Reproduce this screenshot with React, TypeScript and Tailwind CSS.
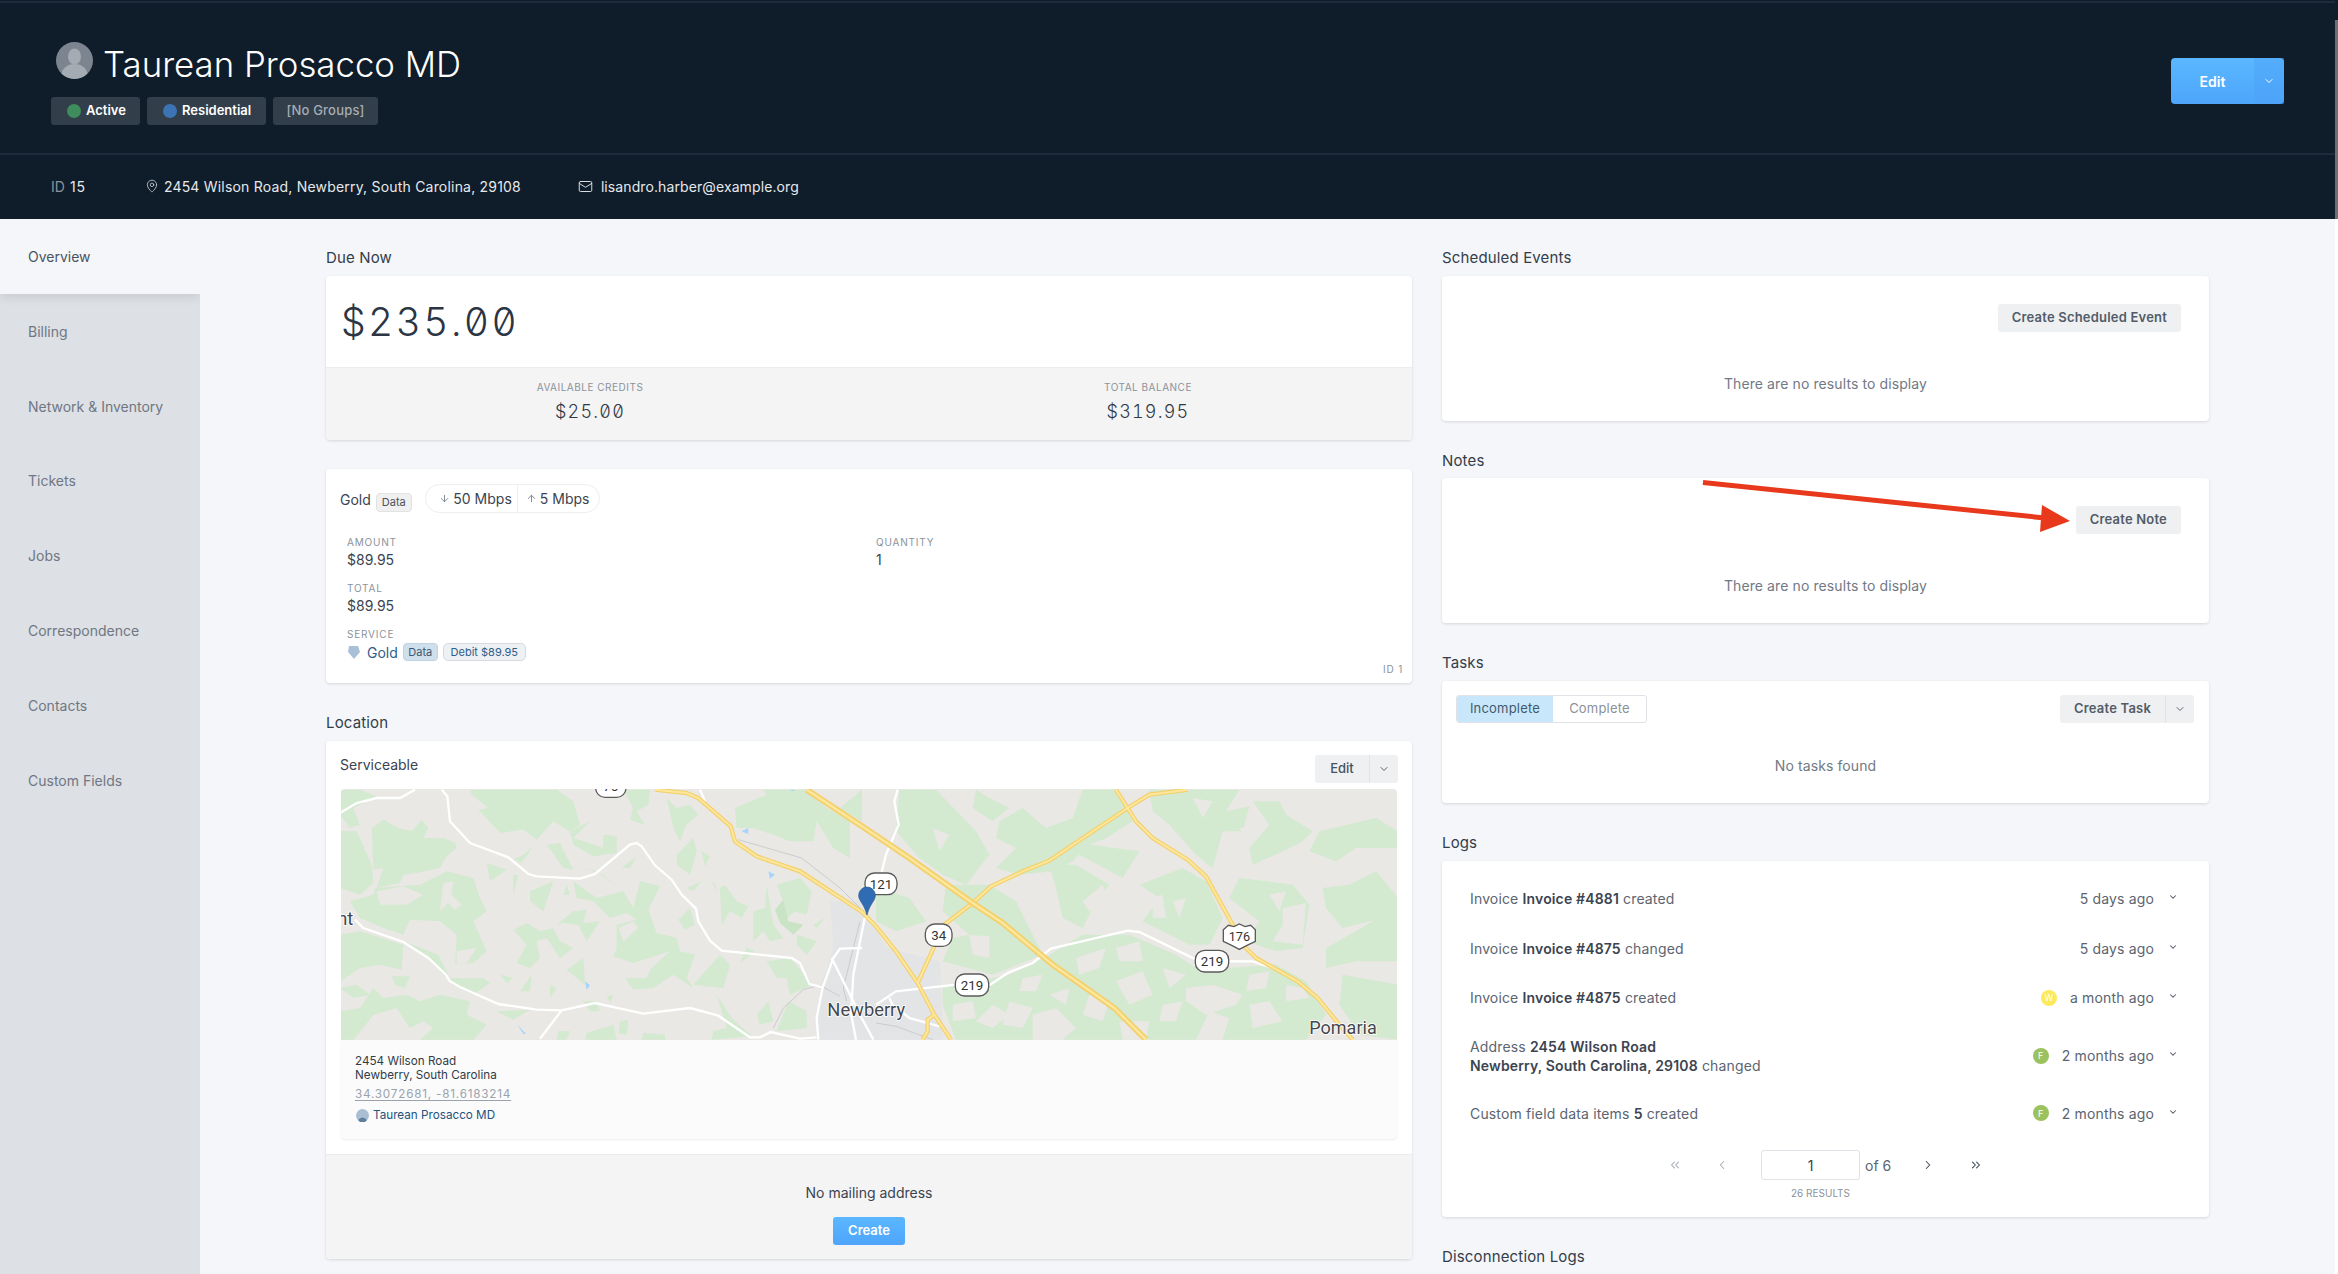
import { ArrowDown, ArrowUp, ChevronDown, ChevronLeft, ChevronRight, ChevronsLeft, ChevronsRight, Mail, MapPin } from "lucide-react";

const sideItems = ["Billing", "Network & Inventory", "Tickets", "Jobs", "Correspondence", "Contacts", "Custom Fields"];

const greens = [
    "390,5 650,5 700,40 720,110 690,130 750,100 700,150 790,180 790,140 830,145 830,195 760,205 700,170 690,130 640,100 590,155 550,125 480,135 430,80 415,65 445,60 395,20",
    "850,5 930,5 925,50 890,70 915,110 870,95 880,60",
    "980,30 1010,60 1050,50 1075,80 1040,110 1020,160 1000,120",
    "1010,200 1060,150 1070,190 1050,260 1010,230",
    "1085,190 1110,205 1095,235",
    "1185,60 1280,20 1270,5 1400,5 1460,60 1530,100 1530,210 1480,180 1430,100 1420,160 1350,160 1300,140 1240,120 1190,120",
    "1500,60 1566,5 1566,100",
    "0,5 60,5 110,25 40,60 60,110 30,120 0,80",
    "0,130 50,130 95,230 100,285 60,320 0,300",
    "95,120 130,95 175,120 215,130 245,95 265,120 250,150 310,150 345,165 350,180 320,205 300,240 230,255 190,260 180,285 110,300 130,240 100,245",
    "105,300 240,290 320,250 400,270 420,330 440,370 400,400 440,490 400,525 345,530 350,440 300,400 210,395 190,440 130,420 60,390 30,340 100,320",
    "0,440 60,430 190,470 185,545 120,530 60,540 0,580",
    "190,460 260,510 330,570 430,570 450,585 400,620 340,590 295,500",
    "100,600 130,630 200,620 240,640 300,620 390,640 380,680 440,710 400,755 240,755 280,720 250,700 210,720 170,660 100,680 70,720 40,755 0,755 0,670 60,660",
    "0,600 50,590 90,620 40,630",
    "155,565 210,565 195,600 165,590",
    "480,560 520,570 500,585",
    "540,610 575,560 570,610",
    "630,590 650,600 630,630",
    "570,310 640,280 610,370 570,340",
    "680,290 690,320 670,320",
    "700,280 770,330 850,310 880,360 900,280 960,295 925,365 950,435 1010,450 1020,490 1065,500 1040,570 1060,600 1000,560 940,600 880,605 855,570 920,570 930,545 990,490 880,525 820,505 830,480 830,410 890,395 860,375 810,390 760,340 710,330",
    "520,425 560,405 600,430 640,420 660,460 700,480 660,510 620,450 590,460 600,510 570,540 530,525 560,470",
    "650,410 700,370 740,365 730,405 780,400 740,460 715,410 670,405",
    "680,545 730,510 735,590",
    "440,225 500,245 450,280",
    "520,260 535,260 520,320",
    "550,200 580,175 545,225 520,215",
    "620,170 660,165 700,245 670,240",
    "730,240 770,250 830,295 790,260",
    "845,240 890,205 870,240",
    "1015,395 1050,360 1065,410 1035,425",
    "1040,300 1085,280 1060,310",
    "1110,280 1135,310 1125,290",
    "1140,300 1155,290 1190,340 1225,355 1205,390 1170,370 1145,410",
    "1240,370 1275,360 1280,290 1300,410 1330,450 1290,460 1270,430 1240,460",
    "1310,290 1380,270 1415,310 1400,380 1365,370 1340,390 1330,340",
    "1220,480 1245,490 1200,525",
    "1140,500 1170,530 1150,600 1060,590",
    "1280,520 1350,510 1420,590 1350,620 1340,570 1310,570",
    "1370,440 1430,460 1400,500 1370,470",
    "1420,410 1455,390 1430,420",
    "1130,620 1175,690 1235,745 1115,755 1120,730 1160,720",
    "1250,680 1285,640 1300,700 1260,710",
    "1345,640 1400,670 1400,720 1310,730",
    "730,640 770,640 780,670 750,670",
    "655,730 690,730 680,755 650,755",
    "740,735 820,710 830,755 735,755",
    "910,735 975,740 975,755 905,755",
    "470,670 570,665 520,695",
    "800,625 820,620 810,645",
    "840,700 865,695 860,740 835,735",
];

const leftHoles = [
    "110,310 190,295 250,320 200,350 120,350",
    "310,285 340,280 330,340 300,370",
    "335,320 365,350 345,365 322,345",
    "350,490 410,480 380,525 350,530",
    "835,420 880,400 895,420 850,460",
];

const rightGreens = [
    "70,5 180,5 300,130 340,200 270,290 200,260 130,210 60,130",
    "300,5 340,30 400,60 350,100 290,60",
    "370,100 440,60 510,120 590,90 620,5 720,5 770,100 690,150 640,170 590,220 530,250 430,260 360,240 420,180 360,150",
    "820,5 1090,5 1050,70 1120,55 1100,130 1040,130 1010,240 960,200 880,110 830,70",
    "1130,40 1210,40 1230,80 1310,130 1280,160 1220,190 1130,230 1120,180 1180,110",
    "1330,130 1500,90 1566,130 1566,180 1440,180 1380,220 1300,190",
    "640,170 790,190 740,270 610,200",
    "520,230 600,230 700,290 650,360 620,420 560,390 540,300",
    "790,290 920,240 990,280 1040,390 1000,470 940,470 860,430 800,400 850,330",
    "0,300 100,330 150,400 60,430 0,400",
    "210,290 340,290 420,340 500,500 400,540 350,560 200,520 230,450 280,440 200,370",
    "200,600 400,560 520,500 620,440 760,440 900,500 960,540 1050,540 1200,530 1290,580 1350,680 1290,755 240,755 200,650",
    "1090,270 1250,290 1300,350 1280,480 1200,490 1110,460 1150,400 1060,330",
    "1340,300 1420,290 1500,250 1566,330 1566,380 1480,400 1400,420 1350,360",
    "1350,480 1440,430 1520,380 1566,380 1566,520 1440,520 1350,540",
    "1400,560 1566,590 1566,755 1450,740 1390,650",
];

const rightHoles = [
    "400,640 470,660 440,720 380,710",
    "470,680 540,660 600,720 560,755 470,755",
    "640,620 700,640 680,700 620,680",
    "720,580 800,550 830,620 760,650",
    "930,600 1010,590 1100,620 1080,650 990,680 930,640",
    "860,540 930,560 880,600",
    "1230,590 1280,600 1300,630 1230,640",
    "1000,670 1060,690 1040,755 960,755",
    "730,700 820,700 810,755 740,755",
    "280,440 340,445 340,510 290,500",
    "600,510 690,480 670,540 610,560",
    "720,480 790,460 800,520 730,520",
    "830,330 860,320 870,390 830,390",
    "890,340 930,330 910,390",
    "620,340 680,290 700,340 640,370",
    "1180,320 1230,310 1210,370",
    "1220,360 1290,345 1280,470 1190,460 1220,410",
    "440,570 500,560 480,610 430,610",
    "520,620 580,600 570,650",
    "860,650 920,640 900,700 850,700",
    "1120,560 1180,550 1170,600 1110,610",
    "1120,650 1180,640 1220,700 1130,720",
    "1320,560 1380,600 1350,640",
    "480,420 530,440 500,480",
    "350,650 400,680 350,720 300,700",
    "230,650 290,640 300,690 230,700",
    "1090,120 1180,110 1120,170",
    "950,30 1010,40 980,90",
    "560,30 610,20 590,70",
    "170,120 220,140 190,190",
    "100,250 170,290 120,320",
];

const whiteRoads = [
    "0,75 50,45 110,30 180,30 225,5",
    "305,5 322,25 330,100 390,165 505,208 565,258 590,265 720,272 765,258 870,170 890,165 905,175 945,232 995,275 1025,320 1068,362 1075,400 1110,458 1145,488 1355,510 1380,525 1408,588 1448,598 1480,510 1500,482 1566,480",
    "45,395 70,420 190,462 265,510 318,560 328,578 360,597 475,648 590,665 665,667 765,645 910,677 1050,660 1135,683 1230,748 1260,748 1292,732 1380,752 1430,748",
    "665,667 600,752",
    "1080,5 1095,40",
    "1448,598 1430,690 1435,755",
    "1475,510 1565,690 1600,755",
    "1575,386 1540,560 1533,676 1548,755",
    "1673,5 1663,40 1676,110 1638,200 1623,260",
    "1608,650 1668,610 1848,590",
    "1948,592 2003,555 2078,525 2133,482 2363,428 2398,432 2568,515 2668,520 2738,520 2798,540",
    "1648,630 1658,650 1708,690 1798,715",
];

const grayRoads = [
    "1195,155 1385,210 1500,300 1560,360",
    "1300,720 1330,660 1390,605 1440,592 1500,625",
    "1560,400 1510,600 1520,640",
    "1608,705 1668,715 1778,755",
];

const yellowRoads = [
    "945,5 1040,15 1075,30 1172,115 1185,160 1250,205 1380,250 1566,372 1608,415 1668,490 1733,585 1783,680 1833,755",
    "1733,585 1783,475 1813,410 1898,345 1953,295 2048,250 2128,218 2363,60 2428,20 2543,5",
    "2328,5 2388,100 2438,150 2543,215 2598,265 2678,410 2708,470 2748,510 2873,580 2933,630 2998,710 3038,755",
    "1783,680 1763,695 1763,730 1748,755",
];

const mainRoad = "1400,5 1566,115 1708,210 1898,345 1988,405 2138,530 2323,660 2418,755";

const shields: [number, number, number, number, string][] = [
    [1575, 255, 96, 65, "121"],
    [1756, 408, 80, 67, "34"],
    [1846, 558, 100, 66, "219"],
    [2566, 487, 100, 65, "219"],
    [767, -40, 91, 68, "76"],
];

function MapDrawing() {
    return (
        <svg viewBox="3 3 3168 753" className="block h-[251px] w-[1056px] rounded-t-[4px]">
            <rect x="0" y="0" width="3180" height="760" fill="#e9e8e4" />
            {greens.map((pts) => <polygon key={pts} points={pts} fill="#d3e9d0" />)}
            {leftHoles.map((pts) => <polygon key={pts} points={pts} fill="#e9e8e4" />)}
            <polygon points="1305,365 1330,335 1345,400 1390,410 1360,440 1320,405" fill="#c8e4c4" />
            <g transform="translate(1608 0)">
                {rightGreens.map((pts) => <polygon key={pts} points={pts} fill="#d3e9d0" />)}
                {rightHoles.map((pts) => <polygon key={pts} points={pts} fill="#e9e8e4" />)}
            </g>
            <polygon points="1470,340 1560,340 1640,480 1800,520 1810,755 1430,755 1440,600 1480,480" fill="#e3e4e6" />
            {["1205,130 1225,120 1225,138", "1285,250 1305,260 1290,272", "735,580 750,592 740,605", "532,710 558,738 550,738", "1350,5 1365,5 1358,10"].map((pts) => (
                <polygon key={pts} points={pts} fill="#a8d3fb" />
            ))}
            {grayRoads.map((pts) => <polyline key={pts} points={pts} fill="none" stroke="#cacccf" strokeWidth="3" />)}
            {whiteRoads.map((pts) => <polyline key={pts} points={pts} fill="none" stroke="#ffffff" strokeWidth="7" />)}
            {yellowRoads.map((pts) => <polyline key={pts} points={pts} fill="none" stroke="#f4d06c" strokeWidth="13" />)}
            {yellowRoads.map((pts) => <polyline key={pts} points={pts} fill="none" stroke="#fde79c" strokeWidth="6" />)}
            <polyline points={mainRoad} fill="none" stroke="#f4d06c" strokeWidth="18" />
            <polyline points={mainRoad} fill="none" stroke="#fde79c" strokeWidth="7" />
            {shields.map(([x, y, w, h, label]) => (
                <g key={label + x}>
                    <rect x={x} y={y} width={w} height={h} rx="28" fill="#ffffff" stroke="#5a5a5a" strokeWidth="4" />
                    <text x={x + w / 2} y={y + h / 2 + 14} textAnchor="middle" fontSize="40" fontFamily="Roboto, sans-serif" fill="#333333">{label}</text>
                </g>
            ))}
            <path d="M2650,425 L2665,412 L2682,416 L2698,408 L2715,416 L2732,412 L2746,425 L2746,460 Q2720,472 2698,484 Q2676,472 2650,460 Z" fill="#ffffff" stroke="#5a5a5a" strokeWidth="4" />
            <text x="2698" y="458" textAnchor="middle" fontSize="38" fontFamily="Roboto, sans-serif" fill="#333333">176</text>
            <path d="M1581,381 C1572,345 1556,340 1556,322 A25,25 0 0 1 1606,322 C1606,340 1590,345 1581,381Z" fill="#2f6cb3" stroke="#26578f" strokeWidth="2" />
            <g fontFamily="Roboto, sans-serif" fill="#43474d" stroke="#ffffff" strokeWidth="5" paintOrder="stroke">
                <text x="1462" y="683" fontSize="55">Newberry</text>
                <text x="2908" y="738" fontSize="54">Pomaria</text>
                <text x="40" y="412" fontSize="55" textAnchor="end">nt</text>
            </g>
        </svg>
    );
}

function Avatar({ className }: { className: string }) {
    return (
        <svg viewBox="0 0 37 37" className={className}>
            <circle cx="18.5" cy="18.5" r="18.5" fill="#7c858f" />
            <clipPath id="avatar-clip"><circle cx="18.5" cy="18.5" r="18.5" /></clipPath>
            <g clipPath="url(#avatar-clip)" fill="#a4abb3">
                <ellipse cx="18.5" cy="14.5" rx="6.5" ry="8" />
                <ellipse cx="18.5" cy="33" rx="13" ry="11" />
            </g>
        </svg>
    );
}

function SectionTitle({ children, className }: { children: string; className: string }) {
    return <div className={`h-[24px] text-[15px] leading-[24px] tracking-[0.01em] text-[#333d49] ${className}`}>{children}</div>;
}

function GrayButton({ children }: { children: string }) {
    return (
        <div className="flex h-[28px] items-center rounded-[3px] bg-[#eff0f2] px-[14px] text-[13px] font-semibold tracking-[0.2px] text-[#525c68]">
            {children}
        </div>
    );
}

function ChevronBox() {
    return (
        <div className="flex h-full w-[29px] items-center justify-center border-l border-[#e2e3e6]">
            <ChevronDown size={12} strokeWidth={1.75} className="text-[#47525f]" />
        </div>
    );
}

function EmptyCard({ button }: { button: string }) {
    return (
        <div className="flex h-[145px] flex-col rounded-[4px] bg-white pt-[28px] shadow-[0_1px_3px_rgba(0,0,0,0.13)]">
            <div className="flex justify-end pr-[28px]">
                <GrayButton>{button}</GrayButton>
            </div>
            <div className="mt-[42px] text-center text-[14px] leading-[20px] tracking-[0.1px] text-[#717985]">There are no results to display</div>
        </div>
    );
}

function Field({ label, value }: { label: string; value: string }) {
    return (
        <div className="h-[46px]">
            <div className="text-[10px] leading-[14px] tracking-[0.08em] text-[#8b929c] uppercase">{label}</div>
            <div className="mt-[2px] text-[14px] leading-[18px] text-[#3a4350]">{value}</div>
        </div>
    );
}

function LogRow({ text, time, badge, tall }: { text: React.ReactNode; time: string; badge?: string; tall?: boolean }) {
    return (
        <div className={`flex items-center justify-between pr-[31px] pl-[28px] tracking-[0.15px] ${tall ? "h-[66px]" : "h-[49.5px]"}`}>
            <div className="text-[14px] leading-[19px] text-[#5b6470]">{text}</div>
            <div className="flex items-center">
                {badge && (
                    <div className={`mr-[13px] flex h-[16px] w-[16px] items-center justify-center rounded-full text-[9px] text-white ${badge === "W" ? "bg-[#fde95c]" : "bg-[#9cc25f]"}`}>
                        {badge}
                    </div>
                )}
                <span className="text-[14px] text-[#5b6470]">{time}</span>
                <ChevronDown size={10} strokeWidth={2.5} className="mb-[3px] ml-[14px] text-[#4a5360]" />
            </div>
        </div>
    );
}

export default function App() {
    return (
        <div className="flex h-screen w-full overflow-hidden bg-[#f4f6fa] font-['Inter',sans-serif]">
            <div className="flex min-w-0 flex-1 flex-col">
                <header className="h-[219px] shrink-0 bg-[#0f1c29] pt-px">
                    <div className="h-[2px] bg-[#1c2c3a]" />
                    <div className="flex h-[150px] items-start justify-between pr-[51px] pl-[51px]">
                        <div className="pt-[39px]">
                            <div className="flex items-start gap-[10px] pl-[5px]">
                                <Avatar className="h-[37px] w-[37px]" />
                                <h1 className="h-[37px] pt-[4px] text-[34.8px] leading-[37px] font-light text-white">Taurean Prosacco MD</h1>
                            </div>
                            <div className="mt-[18px] flex gap-[7px] text-[13px] font-semibold">
                                <div className="flex h-[28px] w-[89px] items-center gap-[5px] rounded-[3px] bg-[#323e4a] pl-[16px] text-white">
                                    <span className="h-[14px] w-[14px] rounded-full bg-[#3f8c5c]" />
                                    Active
                                </div>
                                <div className="flex h-[28px] w-[119px] items-center gap-[5px] rounded-[3px] bg-[#323e4a] pl-[16px] text-white">
                                    <span className="h-[14px] w-[14px] rounded-full bg-[#3b73b5]" />
                                    Residential
                                </div>
                                <div className="flex h-[28px] w-[105px] items-center justify-center rounded-[3px] bg-[#323e4a] font-medium tracking-[0.2px] text-[#a6adb5]">[No Groups]</div>
                            </div>
                        </div>
                        <div className="mt-[55px] flex h-[46px] w-[113px] rounded-[4px] bg-gradient-to-b from-[#5ab7ff] to-[#4ea5fb] text-[14px] font-semibold text-white">
                            <div className="flex flex-1 items-center justify-center">Edit</div>
                            <div className="flex w-[30px] items-center justify-center bg-[#4a9ff5]/40">
                                <ChevronDown size={12} strokeWidth={2} />
                            </div>
                        </div>
                    </div>
                    <div className="h-[2px] bg-[#1c2c3a]" />
                    <div className="flex h-[64px] items-center pb-[2px] pl-[51px] text-[14px] text-[#e6e9ec]">
                        <span className="text-[#8b939c]">ID</span>
                        <span className="ml-[5px] w-[21px] tracking-[1px]">15</span>
                        <MapPin size={14} strokeWidth={1.5} className="ml-[54px] text-[#c2c7cd]" />
                        <span className="ml-[5px] w-[356px] tracking-[0.2px] whitespace-nowrap">2454 Wilson Road, Newberry, South Carolina, 29108</span>
                        <Mail size={15} strokeWidth={1.5} className="ml-[58px] text-[#e6e9ec]" />
                        <span className="ml-[8px] tracking-[0.1px]">lisandro.harber@example.org</span>
                    </div>
                </header>

                <div className="flex min-h-0 flex-1">
                    <nav className="w-[200px] shrink-0 overflow-hidden bg-[#dde0e5]">
                        <div className="relative flex h-[75px] items-center bg-[#f4f6fa] pb-[1px] pl-[28px] text-[14px] text-[#4a5360] shadow-[0_3px_10px_rgba(0,0,0,0.1)]">Overview</div>
                        {sideItems.map((item) => (
                            <div key={item} className="flex h-[74.8px] items-center pl-[28px] text-[14px] text-[#6f7783]">
                                {item}
                            </div>
                        ))}
                    </nav>

                    <main className="flex gap-[30px] pl-[126px]">
                        <div className="w-[1086px] shrink-0">
                            <SectionTitle className="mt-[27px] mb-[6px]">Due Now</SectionTitle>
                            <div className="overflow-hidden rounded-[4px] bg-white shadow-[0_1px_3px_rgba(0,0,0,0.13)]">
                                <div className="flex h-[91px] items-center pt-[2px] pl-[15px] text-[39px] font-light tracking-[2.4px] text-[#2b3543] tabular-nums slashed-zero">$235.00</div>
                                <div className="flex h-[73px] border-t border-[#ececec] bg-[#f4f4f4] text-center">
                                    <div className="ml-[124px] w-[280px] pt-[12px]">
                                        <div className="text-[10px] leading-[14px] tracking-[0.05em] text-[#8b929c] uppercase">Available credits</div>
                                        <div className="mt-[5px] text-[18px] leading-[26px] font-light tracking-[1.2px] text-[#2f3945] tabular-nums slashed-zero">$25.00</div>
                                    </div>
                                    <div className="ml-[278px] w-[280px] pt-[12px]">
                                        <div className="text-[10px] leading-[14px] tracking-[0.05em] text-[#8b929c] uppercase">Total balance</div>
                                        <div className="mt-[5px] text-[18px] leading-[26px] font-light tracking-[1.2px] text-[#2f3945] tabular-nums slashed-zero">$319.95</div>
                                    </div>
                                </div>
                            </div>

                            <div className="mt-[29px] h-[214px] rounded-[4px] bg-white pt-[15px] shadow-[0_1px_3px_rgba(0,0,0,0.13)]">
                                <div className="flex h-[29px] pl-[14px]">
                                    <span className="mt-[6px] text-[14px] leading-[20px] text-[#3a4350]">Gold</span>
                                    <span className="mt-[9px] ml-[5px] flex h-[19px] w-[36px] items-center justify-center rounded-[4px] border border-[#e2e2e2] bg-[#f0f0f0] text-[11px] text-[#4a5360]">Data</span>
                                    <div className="ml-[13px] flex h-[29px] w-[175px] items-center rounded-full border border-[#eceef0] text-[14px] text-[#3a4350]">
                                        <div className="flex h-full w-[92px] items-center justify-end gap-[3px] border-r border-[#eeeeee] pr-[5px]">
                                            <ArrowDown size={11} className="text-[#7a818b]" />
                                            50 Mbps
                                        </div>
                                        <div className="flex flex-1 items-center gap-[3px] pl-[8px]">
                                            <ArrowUp size={11} className="text-[#7a818b]" />
                                            5 Mbps
                                        </div>
                                    </div>
                                </div>
                                <div className="mt-[22px] flex pl-[21px]">
                                    <div className="w-[529px]">
                                        <Field label="Amount" value="$89.95" />
                                        <Field label="Total" value="$89.95" />
                                    </div>
                                    <div>
                                        <Field label="Quantity" value="1" />
                                    </div>
                                </div>
                                <div className="pl-[21px]">
                                    <div className="text-[10px] leading-[14px] tracking-[0.08em] text-[#8b929c] uppercase">Service</div>
                                    <div className="mt-[2px] flex h-[18px] items-center text-[14px] text-[#2e5d8a]">
                                        <svg viewBox="0 0 14 14" className="h-[14px] w-[14px]">
                                            <path d="M2,1 L11,1 L13,7 L7,14 L1,7 Z" fill="#a9c0d6" />
                                        </svg>
                                        <span className="ml-[6px]">Gold</span>
                                        <span className="ml-[5px] flex h-[18px] w-[35px] items-center justify-center rounded-[4px] border border-[#bfd3e2] bg-[#cfe0ec] text-[11px] text-[#3c5870]">Data</span>
                                        <span className="ml-[5px] flex h-[18px] w-[83px] items-center justify-center rounded-[5px] border border-[#d6dadf] bg-[#eef1f4] text-[11px] text-[#2e5d8a]">Debit $89.95</span>
                                    </div>
                                </div>
                                <div className="mt-[2px] pr-[9px] text-right text-[10px] leading-[12px] tracking-[0.08em] text-[#8b929c]">ID 1</div>
                            </div>

                            <SectionTitle className="mt-[28px] mb-[6px]">Location</SectionTitle>
                            <div className="overflow-hidden rounded-[4px] bg-white shadow-[0_1px_3px_rgba(0,0,0,0.13)]">
                                <div className="flex justify-between px-[14px] pt-[14px]">
                                    <span className="text-[14px] leading-[20px] text-[#3a4350]">Serviceable</span>
                                    <div className="flex h-[28px] w-[83px] rounded-[3px] bg-[#eff0f2] text-[13px] font-medium text-[#47525f]">
                                        <div className="flex flex-1 items-center justify-center">Edit</div>
                                        <ChevronBox />
                                    </div>
                                </div>
                                <div className="mx-[15px] mt-[6px]">
                                    <MapDrawing />
                                    <div className="h-[99px] rounded-b-[4px] bg-[#fbfbfb] pt-[14px] pl-[14px] text-[11.7px] leading-[14px] text-[#323b47] shadow-[0_1px_2px_rgba(0,0,0,0.08)]">
                                        <div>2454 Wilson Road</div>
                                        <div>Newberry, South Carolina</div>
                                        <div className="mt-[5px] tracking-[0.8px] text-[#99a2ad] underline underline-offset-2">34.3072681, -81.6183214</div>
                                        <div className="mt-[7px] flex items-center text-[#24527f]">
                                            <svg viewBox="0 0 13 13" className="ml-[1px] h-[13px] w-[13px]">
                                                <circle cx="6.5" cy="6.5" r="6.5" fill="#a9bed2" />
                                                <path d="M2,11 Q6.5,6 11,11 L9,13 L4,13 Z" fill="#5f7e9b" />
                                            </svg>
                                            <span className="ml-[4px]">Taurean Prosacco MD</span>
                                        </div>
                                    </div>
                                </div>
                                <div className="mt-[15px] flex h-[105px] flex-col items-center border-t border-[#ececec] bg-[#f4f4f4] pt-[28px]">
                                    <div className="text-[14px] leading-[20px] text-[#3a4350]">No mailing address</div>
                                    <div className="mt-[14px] flex h-[28px] w-[72px] items-center justify-center rounded-[3px] bg-gradient-to-b from-[#5ab7ff] to-[#4ea5fb] text-[13px] font-semibold text-white">Create</div>
                                </div>
                            </div>
                        </div>

                        <div className="w-[767px] shrink-0">
                            <SectionTitle className="mt-[27px] mb-[6px]">Scheduled Events</SectionTitle>
                            <EmptyCard button="Create Scheduled Event" />

                            <SectionTitle className="mt-[28px] mb-[5px]">Notes</SectionTitle>
                            <div className="relative">
                                <EmptyCard button="Create Note" />
                                <svg viewBox="0 0 372 58" className="absolute top-0 left-[258px] h-[58px] w-[372px]">
                                    <line x1="3" y1="4.5" x2="345" y2="40" stroke="#e8391d" strokeWidth="5" />
                                    <polygon points="342,27 340,54 370,43" fill="#e8391d" />
                                </svg>
                            </div>

                            <SectionTitle className="mt-[28px] mb-[6px]">Tasks</SectionTitle>
                            <div className="h-[122px] rounded-[4px] bg-white pt-[14px] shadow-[0_1px_3px_rgba(0,0,0,0.13)]">
                                <div className="flex justify-between pr-[15px] pl-[14px]">
                                    <div className="flex h-[28px] w-[191px] overflow-hidden rounded-[3px] border border-[#dfe2e6] text-[13px] tracking-[0.2px]">
                                        <div className="flex w-[96px] items-center justify-center bg-[#c9e7fb] text-[#3f5a6e]">Incomplete</div>
                                        <div className="flex flex-1 items-center justify-center text-[#8a9199]">Complete</div>
                                    </div>
                                    <div className="flex h-[28px] w-[134px] rounded-[3px] bg-[#eff0f2] text-[13px] font-semibold tracking-[0.2px] text-[#525c68]">
                                        <div className="flex flex-1 items-center justify-center">Create Task</div>
                                        <ChevronBox />
                                    </div>
                                </div>
                                <div className="mt-[33px] text-center text-[14px] leading-[20px] tracking-[0.1px] text-[#717985]">No tasks found</div>
                            </div>

                            <SectionTitle className="mt-[28px] mb-[6px]">Logs</SectionTitle>
                            <div className="h-[356px] rounded-[4px] bg-white pt-[13px] shadow-[0_1px_3px_rgba(0,0,0,0.13)]">
                                <LogRow text={<>Invoice <b className="font-semibold text-[#3b4450]">Invoice #4881</b> created</>} time="5 days ago" />
                                <LogRow text={<>Invoice <b className="font-semibold text-[#3b4450]">Invoice #4875</b> changed</>} time="5 days ago" />
                                <LogRow text={<>Invoice <b className="font-semibold text-[#3b4450]">Invoice #4875</b> created</>} time="a month ago" badge="W" />
                                <LogRow
                                    tall
                                    text={<>Address <b className="font-semibold text-[#3b4450]">2454 Wilson Road</b><br /><b className="font-semibold text-[#3b4450]">Newberry, South Carolina, 29108</b> changed</>}
                                    time="2 months ago"
                                    badge="F"
                                />
                                <LogRow text={<>Custom field data items <b className="font-semibold text-[#3b4450]">5</b> created</>} time="2 months ago" badge="F" />
                                <div className="mt-[12px] flex h-[30px] items-center pl-[218px] text-[14px] text-[#5b6470]">
                                    <div className="flex w-[30px] justify-center text-[#a3a9b1]"><ChevronsLeft size={14} strokeWidth={1.75} /></div>
                                    <div className="ml-[17px] flex w-[30px] justify-center text-[#a3a9b1]"><ChevronLeft size={14} strokeWidth={1.75} /></div>
                                    <div className="ml-[24px] flex h-[30px] w-[99px] items-center justify-center rounded-[3px] border border-[#dfe2e6] text-[#3a4350]">1</div>
                                    <div className="ml-[5px] w-[25px] whitespace-nowrap">of 6</div>
                                    <div className="ml-[23px] flex w-[30px] justify-center text-[#3a4350]"><ChevronRight size={14} strokeWidth={1.75} /></div>
                                    <div className="ml-[18px] flex w-[30px] justify-center text-[#3a4350]"><ChevronsRight size={14} strokeWidth={1.75} /></div>
                                </div>
                                <div className="mt-[6px] pr-[10px] text-center text-[10px] leading-[14px] text-[#8b929c]">26 RESULTS</div>
                            </div>

                            <SectionTitle className="mt-[28px]">Disconnection Logs</SectionTitle>
                        </div>
                    </main>
                </div>
            </div>
            <div className="flex w-[3px] shrink-0 flex-col">
                <div className="h-[20px] bg-[#0f1c29]" />
                <div className="h-[199px] bg-[#6b6f73]" />
                <div className="flex-1 bg-white" />
            </div>
        </div>
    );
}
